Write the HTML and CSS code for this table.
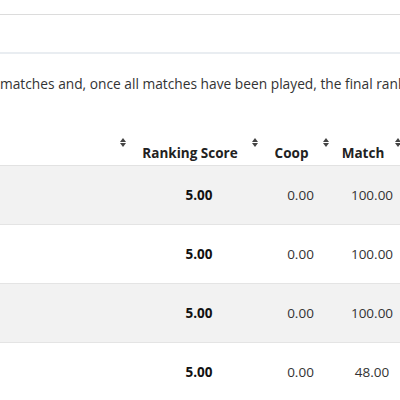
FILE: index.html
```html
<!DOCTYPE html>
<html>
<head>
<meta charset="utf-8">
<link rel="stylesheet" href="styles.css">
</head>
<body>
<div class="page">
  <div class="rule-top"></div>
  <div class="band"></div>
  <p class="intro">matches and, once all matches have been played, the final ranking is determined.</p>
  <div class="table-wrap">
  <table class="ranking">
    <colgroup>
      <col class="c-name">
      <col class="c-score">
      <col class="c-coop">
      <col class="c-match">
    </colgroup>
    <thead>
      <tr>
        <th><span class="sort"></span></th>
        <th>Ranking Score<span class="sort"></span></th>
        <th>Coop<span class="sort"></span></th>
        <th>Match<span class="sort"></span></th>
      </tr>
    </thead>
    <tbody>
      <tr class="odd"><td></td><td class="bold">5.00</td><td>0.00</td><td>100.00</td></tr>
      <tr><td></td><td class="bold">5.00</td><td>0.00</td><td>100.00</td></tr>
      <tr class="odd"><td></td><td class="bold">5.00</td><td>0.00</td><td>100.00</td></tr>
      <tr><td></td><td class="bold">5.00</td><td>0.00</td><td>48.00</td></tr>
    </tbody>
  </table>
  </div>
</div>
</body>
</html>
```
FILE: styles.css
```css
html, body {
  margin: 0;
  padding: 0;
  background: #fff;
}
body {
  font-family: "Open Sans", "DejaVu Sans", sans-serif;
  color: #333;
  overflow: hidden;
  width: 400px;
  height: 400px;
}
.page {
  padding-top: 14px;
}
.rule-top {
  height: 1px;
  background: #dcdcdc;
}
.band {
  height: 37px;
  border-bottom: 2px solid #e9edf1;
}
.intro {
  margin: 20px 0 0 0;
  font-size: 13.75px;
  line-height: 20px;
  white-space: nowrap;
  overflow: hidden;
  color: #333;
}
.table-wrap {
  margin-top: 37px;
  width: 400px;
  overflow: hidden;
}
.ranking {
  border-collapse: collapse;
  table-layout: fixed;
  width: 405px;
  font-size: 13.5px;
}
.c-name { width: 130px; }
.c-score { width: 132px; }
.c-coop { width: 71px; }
.c-match { width: 72px; }
.ranking th {
  box-sizing: border-box;
  position: relative;
  font-weight: 700;
  color: #222;
  text-align: center;
  padding: 13px 12px 2px 0;
  height: 34px;
  line-height: 18px;
  border-bottom: 1px solid #e2e2e2;
  white-space: nowrap;
}
.sort {
  position: absolute;
  right: 4px;
  top: 7px;
  width: 6px;
  height: 9px;
}
.sort::before, .sort::after {
  content: "";
  position: absolute;
  left: 0;
  border-left: 3px solid transparent;
  border-right: 3px solid transparent;
}
.sort::before {
  top: 0;
  border-bottom: 4px solid #444;
}
.sort::after {
  bottom: 0;
  border-top: 4px solid #444;
}
.ranking td {
  height: 58px;
  padding: 0 0 0 6px;
  text-align: center;
  color: #333;
  border-bottom: 1px solid #e4e4e4;
  white-space: nowrap;
}
.ranking tr.odd td {
  background: #f2f2f2;
}
.ranking td.bold {
  font-weight: 700;
  color: #111;
}
```
